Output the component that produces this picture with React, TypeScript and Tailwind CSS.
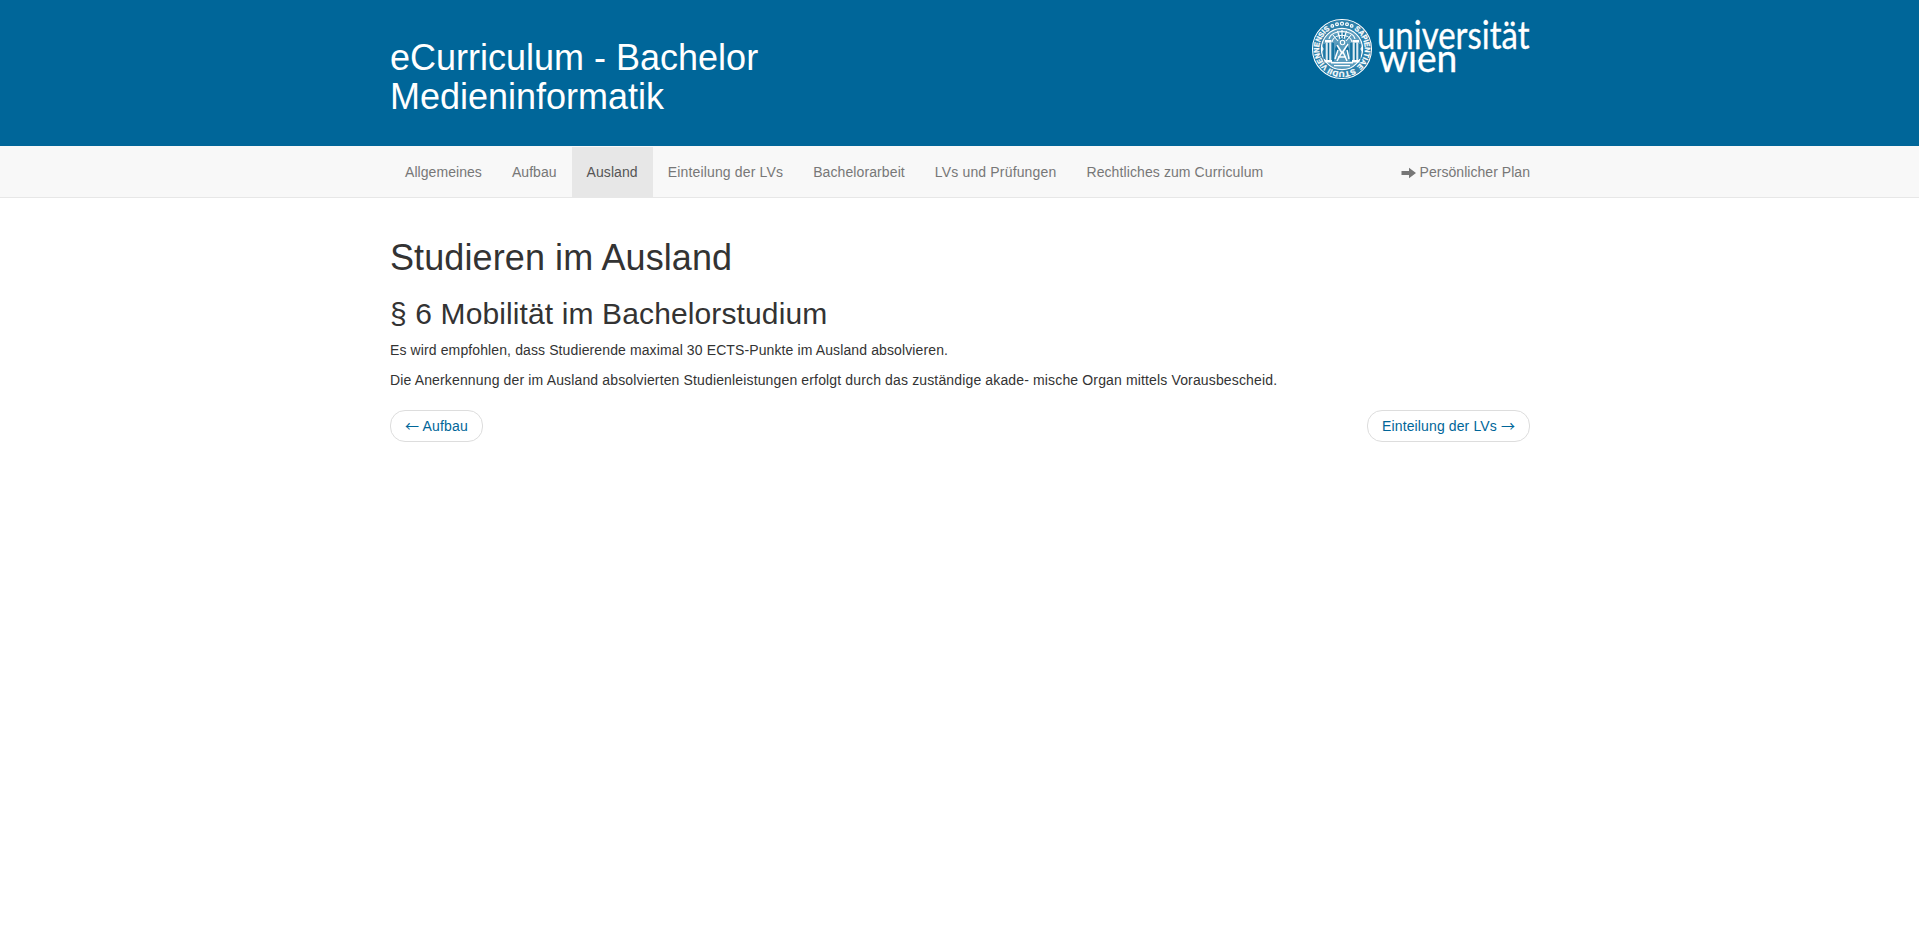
import React from "react";

const links = [
  { label: "Allgemeines", className: "p-[15px] tracking-[0.06px]" },
  { label: "Aufbau", className: "p-[15px] tracking-[0.05px]" },
  { label: "Ausland", className: "bg-[#e7e7e7] p-[15px] text-[#555] tracking-[0.07px]" },
  { label: "Einteilung der LVs", className: "p-[15px] tracking-[0.16px]" },
  { label: "Bachelorarbeit", className: "p-[15px] tracking-[0.1px]" },
  { label: "LVs und Prüfungen", className: "p-[15px] tracking-[0.16px]" },
  { label: "Rechtliches zum Curriculum", className: "p-[15px] tracking-[0.1px]" },
];

function Seal() {
  return (
    <g>
      <circle cx="31" cy="31" r="29.5" fill="none" stroke="#fff" strokeWidth="1.1" />
      <circle cx="31" cy="31" r="25" fill="none" stroke="#fff" strokeWidth="7.4" strokeOpacity="0.18" />
      <circle cx="31" cy="31" r="20.6" fill="#fff" fillOpacity="0.36" stroke="#fff" strokeWidth="1.2" />
      <path id="ring" d="M31 53.8A22.8 22.8 0 1 1 31.01 53.8" fill="none" />
      <path id="ringLow" d="M53.8 31A22.8 22.8 0 1 1 53.8 30.99" fill="none" />
      <g fill="#fff" stroke="#fff" strokeWidth="0.25" fontSize="7.6" fontWeight="700" fontFamily="Liberation Sans, sans-serif">
        <text>
          <textPath href="#ring" startOffset="15" textLength="44" lengthAdjust="spacingAndGlyphs">VIENNENSIS</textPath>
        </text>
        <text>
          <textPath href="#ring" startOffset="84" textLength="43" lengthAdjust="spacingAndGlyphs">SAPIENTIAE</textPath>
        </text>
        <text>
          <textPath href="#ringLow" startOffset="23" textLength="26" lengthAdjust="spacingAndGlyphs">STUDII</textPath>
        </text>
      </g>
      <g fill="none" stroke="#fff" strokeWidth="1.2">
        <circle cx="21.3" cy="7.9" r="1.3" />
        <circle cx="26" cy="6.2" r="1.4" />
        <circle cx="31" cy="5.7" r="1.5" />
        <circle cx="36" cy="6.2" r="1.4" />
        <circle cx="40.7" cy="7.9" r="1.3" />
      </g>
      <g fill="#fff">
        <path d="M14 22h6.5v2.6H14zM41.5 22H48v2.6h-6.5zM13.5 42h7.5v2.6h-7.5zM41 42h7.5v2.6H41z" />
        <path d="M15.2 24.6h1.5V42h-1.5zM18.3 24.6h1.5V42h-1.5zM42.2 24.6h1.5V42h-1.5zM45.3 24.6h1.5V42h-1.5z" />
        <path d="M20 44h22v1.4H20zM23 47h16v1.3H23z" />
      </g>
      <g fill="#006699" fillOpacity="0.85">
        <path d="M21.2 25h1.7v18h-1.7zM39.2 25h1.7v18h-1.7zM12.4 26h1.4v15h-1.4zM48.2 26h1.4v15h-1.4z" />
        <path d="M16.8 25h1.4v17h-1.4zM43.8 25h1.4v17h-1.4z" />
        <path d="M26.5 25l-2.5 6 1 9 2.5-7zM35.5 25l2.5 6-1 9-2.5-7zM29.2 15h1.4v7h-1.4zM32 15h1.4v7H32zM24 17l3 4-1 1-3-4zM38 17l-3 4 1 1 3-4z" />
      </g>
      <g fill="none" stroke="#fff" strokeWidth="1.1">
        <path d="M18 21C20 11 42 11 44 21M21 24C23 15 39 15 41 24" />
        <path d="M31 12v8M26.5 13l2.5 8M35.5 13l-2.5 8M22 17l5 6M40 17l-5 6" />
        <path d="M26 27l5 8 6-9M31 34l-5 9M32 34l4 9M24 41l3-9M38 41l-2-9M27 39h8" strokeWidth="1.5" />
        <circle cx="31.5" cy="24.5" r="2.2" />
        <path d="M10.5 28.5l1.5 2.5-1.5 2.5M51.5 28.5L50 31l1.5 2.5" />
      </g>
    </g>
  );
}

function Logo() {
  return (
    <svg
      className="block h-[64px] w-[219px] overflow-visible"
      viewBox="0 0 219 64"
      role="img"
      aria-label="universität wien"
      fontFamily="Lato, sans-serif"
      fill="#fff"
      stroke="#fff"
      strokeWidth="0"
    >
      <clipPath id="lower">
        <path d="M60 33.3h100V64H60z" />
      </clipPath>
      <Seal />
      <text
        x="66"
        y="30.5"
        fontSize="38"
        strokeWidth="0.3"
        textLength="152.5"
        lengthAdjust="spacingAndGlyphs"
      >
        universität
      </text>
      <g clipPath="url(#lower)">
        <text x="67.8" y="53.7" fontSize="38" strokeWidth="0.3" textLength="78.5" lengthAdjust="spacingAndGlyphs">
          wien
        </text>
      </g>
    </svg>
  );
}

function ArrowRight() {
  return (
    <svg className="mr-1 inline-block h-[14px] w-[15px] align-[-3px]" viewBox="0 0 15 14" fill="currentColor">
      <path d="M.5 5h7.500V1.700L15 7l-7 5.300V9H.5z" />
    </svg>
  );
}

function PagerArrow({ children }: { children: string }) {
  return <span className="font-['Noto_Sans_CJK_JP',sans-serif] leading-none">{children}</span>;
}

export default function App() {
  return (
    <div className="min-h-screen bg-white font-['Liberation_Sans',Arial,sans-serif] text-sm leading-5 text-[#333]">
      <header className="h-[146px] bg-[#006699] pl-px">
        <div className="mx-auto flex w-[1140px] justify-between">
          <h1 className="w-[380px] pt-[38px] text-[36px] leading-[39px] font-medium text-white">
            eCurriculum - Bachelor Medieninformatik
          </h1>
          <div className="pt-[18px]">
            <Logo />
          </div>
        </div>
      </header>

      <nav className="border-y border-t-[#f8f8f8] border-b-[#e7e7e7] bg-[#f8f8f8] pl-px text-[#777]">
        <div className="mx-auto flex w-[1140px] justify-between">
          <ul className="flex">
            {links.map(({ label, className }) => (
              <li key={label} className="flex">
                <a href="#" className={className}>
                  {label}
                </a>
              </li>
            ))}
          </ul>
          <a href="#" className="h-[50px] py-[15px] tracking-[0.04px]">
            <ArrowRight />
            Persönlicher Plan
          </a>
        </div>
      </nav>

      <div className="pl-px">
        <main className="mx-auto w-[1140px] pt-10">
          <h1 className="text-[36px] leading-[39px] tracking-[0.1px]">Studieren im Ausland</h1>
          <h2 className="mt-5 mb-[10px] text-[30px] leading-[33px] tracking-[0.12px]">
            § 6 Mobilität im Bachelorstudium
          </h2>
          <p className="mb-[10px] tracking-[0.115px]">
            Es wird empfohlen, dass Studierende maximal 30 ECTS-Punkte im Ausland absolvieren.
          </p>
          <p className="mb-[10px] tracking-[0.145px]">
            Die Anerkennung der im Ausland absolvierten Studienleistungen erfolgt durch das zuständige akade-
            mische Organ mittels Vorausbescheid.
          </p>
          <div className="my-5 flex justify-between text-[#006699]">
            <a
              href="#"
              className="h-[32px] rounded-[15px] border border-[#ddd] px-[14px] py-[5px] tracking-[0.17px]"
            >
              <PagerArrow>←</PagerArrow> Aufbau
            </a>
            <a
              href="#"
              className="h-[32px] rounded-[15px] border border-[#ddd] px-[14px] py-[5px] tracking-[0.12px]"
            >
              Einteilung der LVs <PagerArrow>→</PagerArrow>
            </a>
          </div>
        </main>
      </div>
    </div>
  );
}
